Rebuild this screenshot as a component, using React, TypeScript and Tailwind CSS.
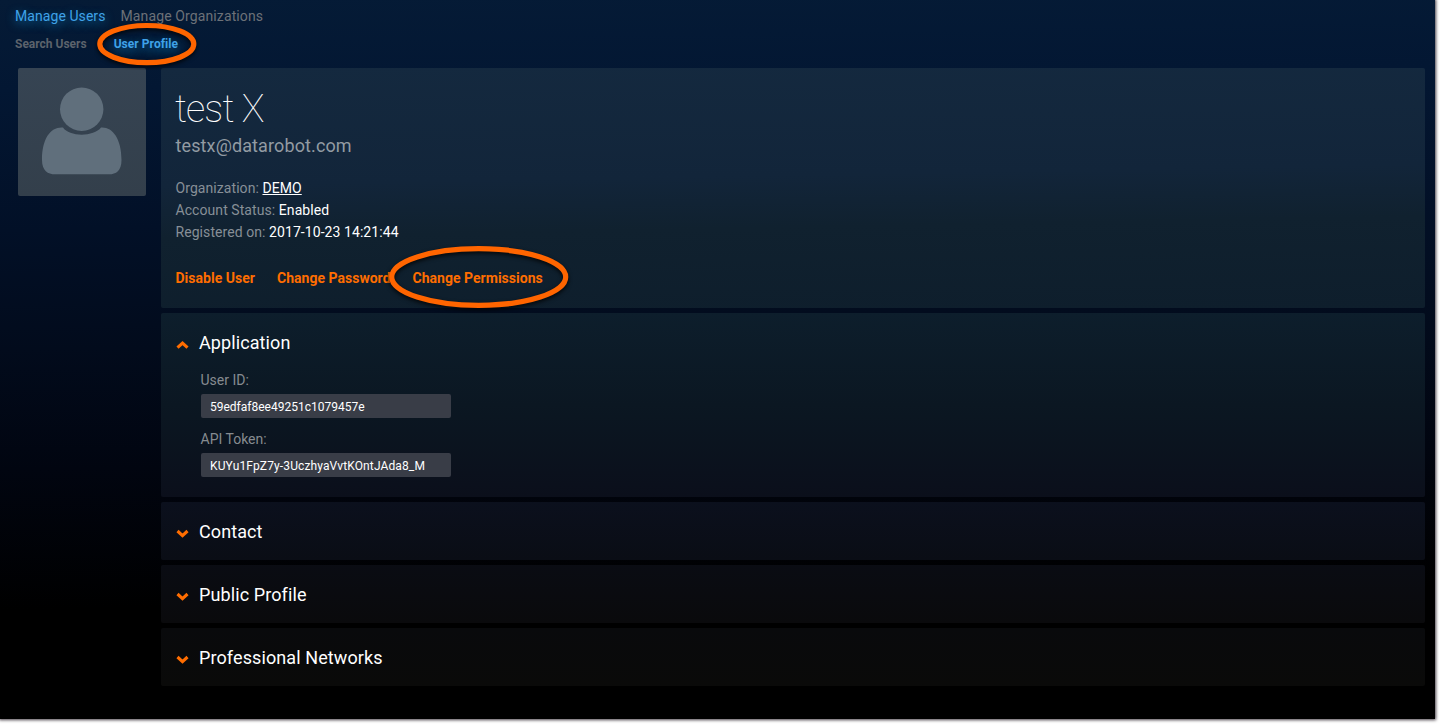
import type { ReactNode } from "react";

function Chevron({ up = false }: { up?: boolean }) {
  return (
    <svg width="14" height="10" viewBox="0 0 14 10" className="mt-[3px] shrink-0" fill="none">
      <path d={up ? "M1.5 7.6 L6.5 3 L11.5 7.6" : "M1.5 2 L6.5 6.6 L11.5 2"} stroke="#ff6d00" strokeWidth="3.1" />
    </svg>
  );
}

function Section({ title, open = false, tone, children }: { title: string; open?: boolean; tone: string; children?: ReactNode }) {
  return (
    <section className={`rounded-[2px] px-[15px] ${open ? "h-[184px]" : "h-[58px]"} ${tone}`}>
      <h2 className="flex h-[58px] items-center gap-[9px] pt-[2px] text-[18px] leading-6 tracking-[0.1px] text-white">
        <Chevron up={open} />
        <span>{title}</span>
      </h2>
      {children}
    </section>
  );
}

function Field({ label, value }: { label: string; value: string }) {
  return (
    <div className="flex h-[59px] flex-col pl-[25px]">
      <span className="-ml-[0.5px] h-[23px] text-[14px] leading-[18px] text-[#868b90]">{label}</span>
      <div className="flex h-6 w-[250px] items-center rounded-[2px] bg-[#393d47] px-[9px] pt-[2px] text-[12px] text-white">
        <span className={value.length < 30 ? "tracking-normal" : "tracking-[0.12px]"}>{value}</span>
      </div>
    </div>
  );
}

function Detail({ label, children }: { label: string; children: ReactNode }) {
  return (
    <div className="h-[22px] text-[14px] leading-[22px] tracking-[0.07px] text-white">
      <span className="text-[#878f97]">{label}</span> {children}
    </div>
  );
}

export default function App() {
  return (
    <div className="h-[724px] w-[1440px] overflow-hidden bg-white font-['Roboto',sans-serif]">
      <main className="flex h-[719px] w-[1435px] flex-col bg-[linear-gradient(179deg,#051b36_0px,#031733_90px,#021027_230px,#020b1c_350px,#010510_470px,#000_610px)] shadow-[0_0_3px_1px_rgba(20,10,20,0.8)]">
        <nav className="flex h-8 items-center gap-[15px] pl-[15px] text-[14px] text-[#6c7178]">
          <a className="tracking-[0.07px] text-[#3fa2e8] [text-shadow:0_3px_10px_#1270aa]">Manage Users</a>
          <a className="tracking-[0.12px]">Manage Organizations</a>
        </nav>
        <nav className="flex h-9 items-start gap-[27px] pl-[15px] pt-1 text-[12px] font-bold leading-4 text-[#5c636c]">
          <a>Search Users</a>
          <div className="relative">
            <a className="tracking-[0.05px] text-[#3fa2e8] [text-shadow:0_3px_10px_#1270aa]">User Profile</a>
            <svg className="absolute -left-[20px] -top-[16px]" width="106" height="50" viewBox="0 0 106 50" fill="none">
              <ellipse cx="52.8" cy="24.1" rx="47" ry="18.6" stroke="#ff6500" strokeWidth="5.2" className="drop-shadow-[0_2px_2px_rgba(0,0,0,0.8)]" />
            </svg>
          </div>
        </nav>
        <div className="flex gap-[15px] pl-[18px]">
          <div className="h-32 w-32 shrink-0 rounded-[2px] bg-[linear-gradient(#364453,#333f4b)]">
            <svg width="128" height="128" viewBox="0 0 128 128" fill="#606f7c">
              <circle cx="63.7" cy="41.2" r="21.7" />
              <path d="M45 47.5 C51 57 76 57 83 47.5 C94 46.5 103.5 58 103.5 80 C103.5 91 98 94.3 91 94.3 H37 C30 94.3 24 91 24 80 C24 58 33 46.5 45 47.5Z" transform="translate(0 12)" />
            </svg>
          </div>
          <div className="flex w-[1264px] flex-col gap-[5px]">
            <section className="h-60 rounded-[2px] bg-[linear-gradient(179deg,#14293f,#12253a_45%,#10212f_65%,#0e1e2c)] pl-[14.5px] pr-[15px] pt-[20px]">
              <h1 className="-ml-[0.5px] h-[44px] text-[38px] font-thin leading-[42px] tracking-[-0.9px] text-white">test X</h1>
              <p className="h-[45px] text-[18px] leading-7 tracking-[0.12px] text-[#929ba3]">testx@datarobot.com</p>
              <Detail label="Organization:"><a className="underline">DEMO</a></Detail>
              <Detail label="Account Status:">Enabled</Detail>
              <Detail label="Registered on:">2017-10-23 14:21:44</Detail>
              <div className="mt-[25px] flex gap-[22px] text-[14px] font-bold leading-5 tracking-[0.02px] text-[#ff6d00]">
                <a>Disable User</a>
                <a>Change Password</a>
                <div className="relative">
                  <a>Change Permissions</a>
                  <svg className="absolute -left-[28px] -top-[26px]" width="188" height="72" viewBox="0 0 188 72" fill="none">
                    <ellipse cx="93.7" cy="35" rx="87" ry="28.3" stroke="#ff6500" strokeWidth="5.2" className="drop-shadow-[0_2px_2px_rgba(0,0,0,0.8)]" />
                  </svg>
                </div>
              </div>
            </section>
            <Section title="Application" open tone="bg-[linear-gradient(#0d1e2c,#0b1722_50%,#0b0f1b)]">
              <Field label="User ID:" value="59edfaf8ee49251c1079457e" />
              <Field label="API Token:" value="KUYu1FpZ7y-3UczhyaVvtKOntJAda8_M" />
            </Section>
            <Section title="Contact" tone="bg-[linear-gradient(#0b101d,#0a0d15)]" />
            <Section title="Public Profile" tone="bg-[linear-gradient(#0a0c13,#0a0a0c)]" />
            <Section title="Professional Networks" tone="bg-[linear-gradient(#090a0c,#0a0a09)]" />
          </div>
        </div>
      </main>
    </div>
  );
}
